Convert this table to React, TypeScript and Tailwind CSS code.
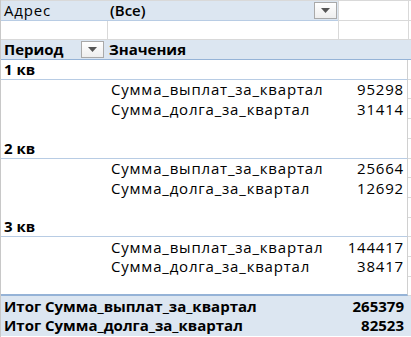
import { ReactNode } from "react"

// Сводная таблица: выплаты и долги по кварталам, фильтр по адресу.

type Quarter = {
  name: string
  payments: number
  debt: number
}

const quarters: Quarter[] = [
  { name: "1 кв", payments: 95298, debt: 31414 },
  { name: "2 кв", payments: 25664, debt: 12692 },
  { name: "3 кв", payments: 144417, debt: 38417 },
]

const totals = [
  { label: "Итог Сумма_выплат_за_квартал", value: 265379 },
  { label: "Итог Сумма_долга_за_квартал", value: 82523 },
]

function DropdownButton() {
  return (
    <span className="flex h-[17px] w-[23px] items-center justify-center border border-[#a9a9a9] bg-gradient-to-b from-white to-[#eeeeee]">
      <svg width="9" height="5" viewBox="0 0 9 5" aria-hidden>
        <path d="M0 0h9L4.5 5z" fill="#555" />
      </svg>
    </span>
  )
}

function Row({ children, className = "" }: { children: ReactNode; className?: string }) {
  return <div className={`flex h-[19.7px] ${className}`}>{children}</div>
}

// Полоса справа от сводной — обычные линии сетки листа
function Tail() {
  return <div className="flex-1 border-b border-[#d9d9d9]" />
}

function DataRow({ label, value }: { label: string; value: number }) {
  return (
    <Row>
      <div className="flex w-[407px] items-center border-r border-[#d0d0d0] bg-white tracking-[0.8px]">
        <span className="w-[337px] pl-[110px]">{label}</span>
        <span className="flex-1 pr-[3px] text-right">{value}</span>
      </div>
      <Tail />
    </Row>
  )
}

function BlankRow({ last = false }: { last?: boolean }) {
  return (
    <Row>
      <div
        className={`w-[407px] border-r border-[#d0d0d0] bg-white ${
          last ? "border-b-2 border-b-[#95b3d7]" : ""
        }`}
      />
      <Tail />
    </Row>
  )
}

export default function App() {
  return (
    <div
      className="h-[337px] w-[411px] overflow-hidden border-l border-[#c8c8c8] bg-white text-[15px] leading-none text-black"
      style={{ fontFamily: '"Open Sans", "Noto Sans", sans-serif' }}
    >
      {/* кусок строки над фильтром */}
      <div className="flex h-[1px] border-b border-[#d9d9d9]">
        <div className="w-[107px] border-r border-[#d9d9d9]" />
        <div className="w-[231px] border-r border-[#d9d9d9]" />
        <div className="w-[70px] border-r border-[#d9d9d9]" />
      </div>

      {/* фильтр отчёта */}
      <Row>
        <div className="flex w-[337px] items-center border-b border-[#b8cce4] bg-[#dce6f1]">
          <span className="w-[109px] pl-[3px] tracking-[0.8px]">Адрес</span>
          <span className="flex-1 font-semibold">(Все)</span>
          <span className="mr-[1px]">
            <DropdownButton />
          </span>
        </div>
        <div className="w-[71px] border-x border-b border-[#d9d9d9]" />
        <Tail />
      </Row>

      <Row>
        <div className="w-[107px] border-r border-b border-[#d9d9d9]" />
        <div className="w-[231px] border-r border-b border-[#d9d9d9]" />
        <div className="w-[70px] border-r border-b border-[#d9d9d9]" />
        <Tail />
      </Row>

      {/* заголовок сводной */}
      <Row>
        <div className="flex w-[411px] items-center border-b border-[#95b3d7] bg-[#dce6f1] font-bold">
          <span className="w-[80px] pl-[3px]">Период</span>
          <DropdownButton />
          <span className="pl-[5px]">Значения</span>
        </div>
      </Row>

      {quarters.map((q, i) => (
        <div key={q.name}>
          <Row>
            <div className="flex w-[407px] items-center border-r border-b border-[#d0d0d0] border-b-[#b8cce4] bg-white pl-[3px] font-bold">
              {q.name}
            </div>
            <Tail />
          </Row>
          <DataRow label="Сумма_выплат_за_квартал" value={q.payments} />
          <DataRow label="Сумма_долга_за_квартал" value={q.debt} />
          <BlankRow last={i === quarters.length - 1} />
        </div>
      ))}

      {/* общие итоги */}
      {totals.map((t) => (
        <Row key={t.label}>
          <div className="flex w-[411px] items-center bg-[#dce6f1] font-bold">
            <span className="flex-1 pl-[3px]">{t.label}</span>
            <span className="pr-[7px]">{t.value}</span>
          </div>
        </Row>
      ))}
    </div>
  )
}
